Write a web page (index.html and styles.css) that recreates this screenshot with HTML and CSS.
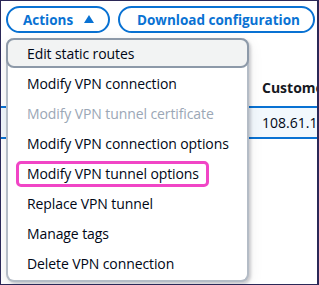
FILE: index.html
```html
<!DOCTYPE html>
<html lang="en">
<head>
    <meta charset="UTF-8">
    <meta name="viewport" content="width=device-width, initial-scale=1.0">
    <title>VPN connection actions</title>
    <link rel="stylesheet" href="styles.css">
</head>
<body>
    <div class="frame">
        <div class="toolbar">
            <button class="btn btn-actions">Actions
                <svg class="caret" width="10" height="8" viewBox="0 0 10 8"><path d="M5 0 L10 8 L0 8 Z" fill="currentColor"/></svg>
            </button>
            <button class="btn btn-download">Download configuration</button>
        </div>
        <div class="grid">
            <div class="row head">
                <div class="cell"></div>
                <div class="cell">Customer gateway address</div>
            </div>
            <div class="row selected">
                <div class="cell"></div>
                <div class="cell">108.61.11.24</div>
            </div>
        </div>
        <ul class="menu">
            <li class="item hover">Edit static routes</li>
            <li class="item">Modify VPN connection</li>
            <li class="item disabled">Modify VPN tunnel certificate</li>
            <li class="item">Modify VPN connection options</li>
            <li class="item"><span class="mark">Modify VPN tunnel options</span></li>
            <li class="item">Replace VPN tunnel</li>
            <li class="item">Manage tags</li>
            <li class="item">Delete VPN connection</li>
        </ul>
    </div>
</body>
</html>
```

FILE: styles.css
```css
body{
    margin: 0;
    background: white;
    font-family: "Open Sans", "Noto Sans", sans-serif;
    color: #000716;
}
.frame{
    position: relative;
    width: 319px;
    height: 285px;
    box-sizing: border-box;
    border: 1px solid #2b2858;
    border-right-width: 2px;
    overflow: hidden;
    background: white;
}
.toolbar{
    display: flex;
    gap: 8px;
    padding: 5px 0 0 5px;
}
.btn{
    display: flex;
    align-items: center;
    gap: 11px;
    height: 27px;
    box-sizing: border-box;
    border: 2px solid #0972d3;
    border-radius: 20px;
    background: white;
    color: #0972d3;
    font-family: inherit;
    font-weight: bold;
    font-size: 13.5px;
    padding: 0 15px;
    white-space: nowrap;
}
.btn-actions{
    width: 104px;
    padding-right: 10px;
}
.btn-download{
    width: 197px;
    padding-left: 17px;
}
.caret{
    flex-shrink: 0;
    margin-top: -1px;
}
.grid{
    margin-top: 37px;
}
.row{
    display: grid;
    grid-template-columns: 249px 1fr;
    white-space: nowrap;
    font-size: 14px;
}
.cell{
    padding-left: 12px;
    overflow: hidden;
}
.head{
    height: 36px;
    line-height: 36px;
    font-weight: bold;
    color: #16191f;
}
.selected{
    height: 33px;
    line-height: 29px;
    box-sizing: border-box;
    background: #f2f8fd;
    border-top: 2px solid #0972d3;
    border-bottom: 2px solid #0972d3;
}
.menu{
    position: absolute;
    left: 5px;
    top: 37px;
    width: 243px;
    box-sizing: border-box;
    margin: 0;
    padding: 0 0 2px;
    list-style: none;
    background: white;
    border: 2px solid #b4bcc6;
    border-top: none;
    border-radius: 8px;
    box-shadow: 2px 2px 3px rgba(0, 7, 22, 0.18), 0 4px 16px rgba(0, 7, 22, 0.08);
}
.item{
    height: 30px;
    box-sizing: border-box;
    padding: 2px 0 0 19px;
    line-height: 28px;
    font-size: 14px;
    letter-spacing: -0.1px;
    white-space: nowrap;
}
.hover{
    margin: 0 -2px;
    padding: 1px 0 0 19px;
    line-height: 25px;
    background: #f2f3f3;
    border: 2px solid #8d99a8;
    border-radius: 8px;
}
.disabled{
    color: #9ba7b6;
}
.mark{
    display: inline-block;
    margin-left: -11px;
    padding: 0 7px 0 8px;
    line-height: 20px;
    border: 3px solid #f145c6;
    border-radius: 5px;
}
```
